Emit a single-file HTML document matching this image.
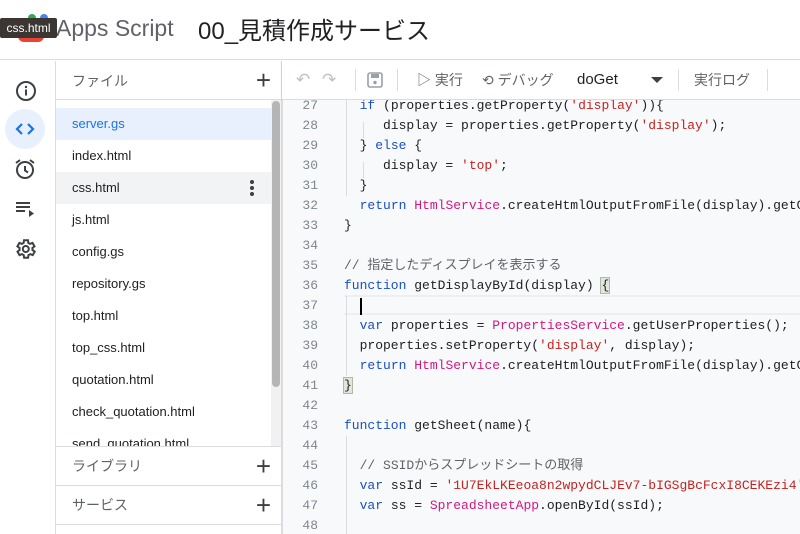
<!DOCTYPE html>
<html><head><meta charset="utf-8"><style>
*{margin:0;padding:0;box-sizing:border-box}
body{width:800px;height:534px;overflow:hidden;background:#fff;font-family:"Liberation Sans","Noto Sans CJK JP",sans-serif;position:relative;color:#3c4043}
.abs{position:absolute}
#hdr{left:0;top:0;width:800px;height:60px;border-bottom:1px solid #dadce0}
#rail{left:0;top:61px;width:56px;height:473px;border-right:1px solid #dadce0}
#files{left:56px;top:61px;width:226px;height:473px;border-right:1px solid #dadce0}
#tb{left:282px;top:61px;width:518px;height:39px;border-bottom:1px solid #dadce0;background:#fff;box-shadow:0 1px 2px rgba(0,0,0,.15)}
#ed{left:282px;top:100px;width:518px;height:434px;background:#f8f9fa;overflow:hidden}
.ln{position:absolute;left:0;width:36px;text-align:right;font:13px "Liberation Mono",monospace;color:#80868b;line-height:20px}
.cd{position:absolute;left:62px;font:13px "Liberation Mono","Noto Sans CJK JP",monospace;color:#202124;line-height:20px;white-space:pre}
.k{color:#1a4fc4}.s{color:#c5221f}.c{color:#d01884}.m{color:#5f6368}
.fi{position:absolute;left:0;width:215px;height:32px;line-height:32px;padding-left:16px;font-size:13px;color:#202124}
.plus{position:absolute;right:10px;font-size:26px;color:#3c4043;font-weight:300;line-height:1}
.sec{position:absolute;left:0;width:225px;height:39px;border-top:1px solid #dadce0;background:#fff;font-size:14px;color:#5f6368;line-height:38px;padding-left:16px}
.tbt{position:absolute;top:0;line-height:38px;font-size:14px;color:#5f6368}
.sep{position:absolute;top:8px;width:1px;height:22px;background:#dadce0}
.guide{position:absolute;width:1px;background:#dadce0}
.dot{position:absolute;left:194px;width:4px;height:4px;border-radius:50%;background:#3c4043}
</style></head><body>
<div id="hdr" class="abs">
 <div class="abs" style="left:28px;top:14px;width:8px;height:8px;border-radius:50%;background:#34a853"></div>
 <div class="abs" style="left:40px;top:14px;width:8px;height:8px;border-radius:50%;background:#4285f4"></div>
 <div class="abs" style="left:18px;top:30px;width:26px;height:12px;border-radius:0 0 6px 6px;background:#ea4335"></div>
 <div class="abs" style="left:56px;top:15px;font-size:23px;color:#5f6368">Apps Script</div>
 <div class="abs" style="left:198px;top:11px;font-size:24px;color:#202124">00_見積作成サービス</div>
 <div class="abs" style="left:0;top:18px;width:57px;height:20px;background:#3c3633;color:#fff;font-size:12px;line-height:20px;text-align:center;border-radius:2px">css.html</div>
</div>
<div id="rail" class="abs">
 <svg class="abs" style="left:14px;top:18px" width="24" height="24" viewBox="0 0 24 24"><circle cx="12" cy="12" r="9" fill="none" stroke="#3c4043" stroke-width="2"/><rect x="11" y="10.5" width="2" height="6" fill="#3c4043"/><circle cx="12" cy="8" r="1.2" fill="#3c4043"/></svg>
 <div class="abs" style="left:5px;top:48px;width:40px;height:40px;border-radius:50%;background:#e8f0fe"></div>
 <svg class="abs" style="left:13px;top:56px" width="24" height="24" viewBox="0 0 24 24"><path d="M9 7l-5 5 5 5M15 7l5 5-5 5" fill="none" stroke="#1a73e8" stroke-width="2.2"/></svg>
 <svg class="abs" style="left:13px;top:96px" width="24" height="24" viewBox="0 0 24 24"><circle cx="12" cy="13" r="8" fill="none" stroke="#3c4043" stroke-width="2"/><path d="M12 9v4.5l3 2M3 6l4-3M21 6l-4-3" fill="none" stroke="#3c4043" stroke-width="2"/></svg>
 <svg class="abs" style="left:13px;top:136px" width="24" height="24" viewBox="0 0 24 24"><path d="M3 6h14M3 10h14M3 14h9" stroke="#3c4043" stroke-width="2"/><path d="M16 13v7l5-3.5z" fill="#3c4043"/></svg>
 <svg class="abs" style="left:13px;top:176px" width="24" height="24" viewBox="0 0 24 24"><path d="M19.4 13a7.5 7.5 0 000-2l2.1-1.6-2-3.5-2.5 1a7 7 0 00-1.7-1L15 3.3h-4l-.4 2.6a7 7 0 00-1.7 1l-2.5-1-2 3.5L6.6 11a7.5 7.5 0 000 2l-2.1 1.6 2 3.5 2.5-1a7 7 0 001.7 1l.4 2.6h4l.4-2.6a7 7 0 001.7-1l2.5 1 2-3.5z" fill="none" stroke="#3c4043" stroke-width="2"/><circle cx="12.8" cy="12" r="3" fill="none" stroke="#3c4043" stroke-width="2"/></svg>
</div>
<div id="files" class="abs">
 <div class="abs" style="left:16px;top:10px;font-size:14px;color:#5f6368">ファイル</div>
 <div class="plus" style="top:6px">+</div>
 <div class="abs" style="left:0;top:38px;width:225px;height:1px;background:#dadce0"></div>
 <div class="fi" style="top:47px;background:#e8f0fe;color:#1a73e8">server.gs</div>
 <div class="fi" style="top:79px">index.html</div>
 <div class="fi" style="top:111px;background:#f1f3f4">css.html</div>
 <div class="dot" style="top:119px"></div><div class="dot" style="top:125px"></div><div class="dot" style="top:131px"></div>
 <div class="fi" style="top:143px">js.html</div>
 <div class="fi" style="top:175px">config.gs</div>
 <div class="fi" style="top:207px">repository.gs</div>
 <div class="fi" style="top:239px">top.html</div>
 <div class="fi" style="top:271px">top_css.html</div>
 <div class="fi" style="top:303px">quotation.html</div>
 <div class="fi" style="top:335px">check_quotation.html</div>
 <div class="fi" style="top:367px">send_quotation.html</div>
 <div class="abs" style="left:215px;top:39px;width:10px;height:346px;background:#f1f1f1"></div>
 <div class="abs" style="left:216px;top:40px;width:8px;height:286px;background:#b5b5b5;border-radius:4px"></div>
 <div class="sec" style="top:385px">ライブラリ<span class="plus" style="top:6px">+</span></div>
 <div class="sec" style="top:424px">サービス<span class="plus" style="top:6px">+</span></div>
 <div class="abs" style="left:0;top:463px;width:225px;height:1px;background:#dadce0"></div>
</div>
<div id="tb" class="abs">
 <div class="tbt" style="left:14px;color:#bdc1c6;font-size:17px">↶</div>
 <div class="tbt" style="left:40px;color:#bdc1c6;font-size:17px">↷</div>
 <div class="sep" style="left:73px"></div>
 <svg class="abs" style="left:84px;top:10px" width="18" height="18" viewBox="0 0 18 18"><rect x="2" y="2" width="14" height="14" rx="2" fill="none" stroke="#9aa0a6" stroke-width="1.6"/><rect x="5" y="3" width="8" height="4" fill="#9aa0a6"/><circle cx="9" cy="11.5" r="1.7" fill="#9aa0a6"/></svg>
 <div class="sep" style="left:115px"></div>
 <div class="tbt" style="left:135px">▷ 実行</div>
 <div class="tbt" style="left:200px">⟲ デバッグ</div>
 <div class="tbt" style="left:295px;color:#202124;font-size:15px">doGet</div>
 <div class="abs" style="left:369px;top:16px;width:0;height:0;border-left:6px solid transparent;border-right:6px solid transparent;border-top:6px solid #3c4043"></div>
 <div class="sep" style="left:396px"></div>
 <div class="tbt" style="left:412px">実行ログ</div>
 <div class="sep" style="left:485px"></div>
</div>
<div id="ed" class="abs">
 <div class="abs" style="left:0;top:0;width:1px;height:434px;background:#dadce0"></div>
 <div class="abs" style="left:62px;top:195px;width:456px;height:20px;border-top:2px solid #eceef0;border-bottom:2px solid #eceef0"></div>
 <div class="guide" style="left:64px;top:0;height:96px"></div>
 <div class="guide" style="left:81px;top:22px;height:16px"></div>
 <div class="guide" style="left:81px;top:62px;height:16px"></div>
 <div class="guide" style="left:64px;top:196px;height:80px"></div>
 <div class="guide" style="left:64px;top:336px;height:100px"></div>
 <div class="abs" style="left:78px;top:198px;width:2px;height:17px;background:#000"></div>
 <div class="ln" style="top:-4px">27<br>28<br>29<br>30<br>31<br>32<br>33<br>34<br>35<br>36<br>37<br>38<br>39<br>40<br>41<br>42<br>43<br>44<br>45<br>46<br>47<br>48</div>
 <div class="cd" style="top:-4px">  <span class="k">if</span> (properties.getProperty(<span class="s">'display'</span>)){
     display = properties.getProperty(<span class="s">'display'</span>);
  } <span class="k">else</span> {
     display = <span class="s">'top'</span>;
  }
  <span class="k">return</span> <span class="c">HtmlService</span>.createHtmlOutputFromFile(display).getC
}

<span class="m">// 指定したディスプレイを表示する</span>
<span class="k">function</span> getDisplayById(display) <span style="background:#e0e6dc;outline:1px solid #b0b8a8">{</span>

  <span class="k">var</span> properties = <span class="c">PropertiesService</span>.getUserProperties();
  properties.setProperty(<span class="s">'display'</span>, display);
  <span class="k">return</span> <span class="c">HtmlService</span>.createHtmlOutputFromFile(display).getC
<span style="background:#e0e6dc;outline:1px solid #b0b8a8">}</span>

<span class="k">function</span> getSheet(name){

  <span class="m">// SSIDからスプレッドシートの取得</span>
  <span class="k">var</span> ssId = <span class="s">'1U7EkLKEeoa8n2wpydCLJEv7-bIGSgBcFcxI8CEKEzi4'</span>
  <span class="k">var</span> ss = <span class="c">SpreadsheetApp</span>.openById(ssId);
</div>
</div>
</body></html>
